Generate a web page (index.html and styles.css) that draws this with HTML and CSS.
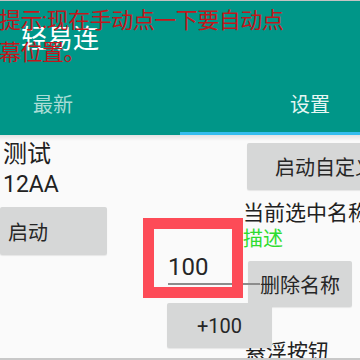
FILE: index.html
```html
<!DOCTYPE html>
<html lang="zh-CN">

<head>
    <meta charset="UTF-8">
    <meta name="viewport" content="width=device-width, initial-scale=1.0">
    <title>轻易连</title>
    <link rel="stylesheet" href="styles.css">
</head>

<body>
    <div class="page">
        <div class="appbar">
            <div class="title">轻易连</div>
            <div class="tabs">
                <div class="tab tab-left">最新</div>
                <div class="tab tab-right active">设置</div>
            </div>
        </div>

        <div class="content">
            <div class="col col-left">
                <div class="name">测试</div>
                <div class="code">12AA</div>
                <button class="btn btn-start">启动</button>
            </div>

            <div class="col col-mid">
                <div class="edit">100</div>
                <button class="btn btn-plus">+100</button>
            </div>

            <div class="col col-right">
                <button class="btn btn-custom">启动自定义</button>
                <div class="label">当前选中名称</div>
                <div class="desc">描述</div>
                <button class="btn btn-delete">删除名称</button>
                <div class="label float-label">悬浮按钮</div>
            </div>
        </div>

        <div class="navline"></div>
    </div>

    <!-- overlays drawn over the app -->
    <div class="hint">提示:现在手动点一下要自动点<br>幕位置。</div>
    <div class="highlight"></div>
</body>

</html>
```

FILE: styles.css
```css
body {
    font-family: Roboto, "Noto Sans CJK SC", sans-serif;
    margin: 0;
    width: 360px;
    height: 360px;
    overflow: hidden;
    position: relative;
    background-color: #fafafa;
}

.page {
    display: flex;
    flex-direction: column;
    height: 360px;
}

.appbar {
    background-color: #009688;
    border-top: 1px solid #c4c4c4;
    padding-top: 22px;
    position: relative;
    z-index: 3;
}

.title {
    color: #ffffff;
    font-size: 26px;
    line-height: 32px;
    padding-left: 21px;
    position: relative;
    z-index: 5;
}

.tabs {
    display: flex;
    height: 80px;
}

.tab {
    flex: 0 0 50%;
    box-sizing: border-box;
    padding-top: 38px;
    font-size: 20px;
    line-height: 24px;
    color: #a9dcd5;
    border-bottom: 3px solid transparent;
}

.tab-left {
    padding-left: 33px;
}

.tab-right {
    padding-left: 110px;
}

.tab.active {
    color: #e6f6f3;
    border-bottom-color: #33bdee;
}

.content {
    flex: 1;
    display: flex;
    overflow: hidden;
    background: linear-gradient(#e2e2e2, #fafafa 6px);
    color: #212121;
}

.col {
    display: flex;
    flex-direction: column;
    align-items: flex-start;
}

.col-left {
    width: 143px;
    padding-top: 3px;
}

.col-mid {
    width: 100px;
}

.col-right {
    flex: 1;
    min-width: 0;
    white-space: nowrap;
}

.name {
    font-size: 24px;
    line-height: 32px;
    padding-left: 3px;
}

.code {
    font-size: 23px;
    line-height: 30px;
    padding-left: 3px;
}

.btn {
    font-family: Roboto, "Noto Sans CJK SC", sans-serif;
    font-size: 20px;
    color: #262626;
    background-color: #d6d7d7;
    border: none;
    border-radius: 2px;
    box-shadow: 0 1px 1px rgba(0, 0, 0, 0.08);
    padding: 0;
    display: flex;
    align-items: center;
    justify-content: center;
    flex-shrink: 0;
}

.btn-start {
    margin-top: 7px;
    width: 107px;
    height: 48px;
    justify-content: flex-start;
    padding-left: 8px;
}

.edit {
    position: relative;
    z-index: 1;
    margin-top: 118px;
    margin-left: 25px;
    width: 92px;
    font-size: 24px;
    line-height: 28px;
    padding-bottom: 2px;
    color: #262626;
    border-bottom: 2px solid #8c8c8c;
}

.btn-plus {
    position: relative;
    z-index: 1;
    margin-top: 18px;
    margin-left: 24px;
    width: 105px;
    height: 45px;
}

.btn-custom {
    margin-top: 8px;
    margin-left: 4px;
    width: 156px;
    height: 47px;
    justify-content: flex-start;
    padding-left: 28px;
}

.label {
    font-size: 21px;
    line-height: 26px;
    margin-top: 10px;
}

.desc {
    font-size: 20px;
    line-height: 26px;
    color: #2fdc2f;
}

.btn-delete {
    margin-top: 9px;
    margin-left: 5px;
    width: 104px;
    height: 46px;
}

.float-label {
    margin-top: 32px;
    margin-left: 2px;
}

.navline {
    height: 2px;
    background-color: #c8c8c8;
}

.hint {
    position: absolute;
    top: 5px;
    left: -1px;
    z-index: 4;
    font-size: 22px;
    letter-spacing: -0.5px;
    line-height: 32px;
    color: #c1171c;
    white-space: nowrap;
}

.highlight {
    position: absolute;
    left: 143px;
    top: 218px;
    width: 78px;
    height: 58px;
    border: 11px solid #fd4b57;
    z-index: 6;
}
```
